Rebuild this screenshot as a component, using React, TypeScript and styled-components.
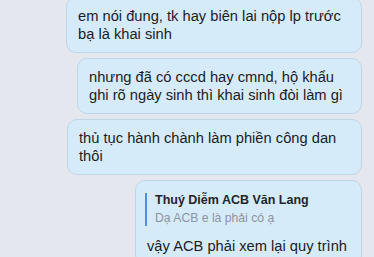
import React from "react";
import styled, { createGlobalStyle } from "styled-components";

const GlobalStyle = createGlobalStyle`
  html, body {
    margin: 0;
    padding: 0;
    background: #e4e7ee;
  }
  body {
    width: 374px;
    height: 257px;
    overflow: hidden;
    font-family: "Liberation Sans", Arial, sans-serif;
    -webkit-font-smoothing: antialiased;
  }
`;

const Thread = styled.div`
  display: flex;
  flex-direction: column;
  align-items: flex-end;
  gap: 5px;
  padding-right: 12px;
  margin-top: -3px;
`;

const Bubble = styled.div<{ $width: number }>`
  box-sizing: border-box;
  width: ${(p) => p.$width}px;
  padding: 9px 8px 9px 11px;
  background: #d6ebfa;
  border: 1px solid #bed6e9;
  border-radius: 10px;
  color: #1b1c1e;
  font-size: 14.7px;
  line-height: 18px;
`;

const Quote = styled.div`
  display: flex;
  flex-direction: column;
  gap: 3px;
  margin: 3px 0 11px -2px;
  padding-left: 8px;
  border-left: 2px solid #4a8fe6;
`;

const QuoteName = styled.div`
  font-size: 12.5px;
  line-height: 15px;
  font-weight: 700;
  color: #232428;
`;

const QuoteText = styled.div`
  font-size: 12.2px;
  line-height: 15px;
  color: #8c939c;
`;

const messages = [
  { width: 296, text: "em nói đung, tk hay biên lai nộp lp trước bạ là khai sinh" },
  { width: 285, text: "nhưng đã có cccd hay cmnd, hộ khẩu ghi rõ ngày sinh thì khai sinh đòi làm gì" },
  { width: 295, text: "thủ tục hành chành làm phiền công dan thôi" },
];

export default function App() {
  return (
    <>
      <GlobalStyle />
      <Thread>
        {messages.map((m, i) => (
          <Bubble key={i} $width={m.width}>
            {m.text}
          </Bubble>
        ))}
        <Bubble $width={227}>
          <Quote>
            <QuoteName>Thuý Diễm ACB Văn Lang</QuoteName>
            <QuoteText>Dạ ACB e là phải có ạ</QuoteText>
          </Quote>
          vậy ACB phải xem lại quy trình
        </Bubble>
      </Thread>
    </>
  );
}
